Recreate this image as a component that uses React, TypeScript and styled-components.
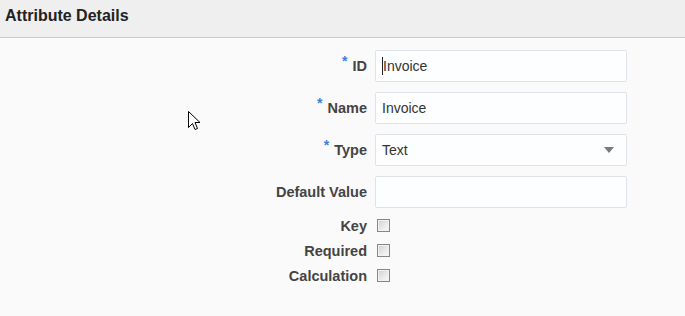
import styled, { createGlobalStyle } from "styled-components";

const GlobalStyle = createGlobalStyle`
  body {
    margin: 0;
    background: #fafafa;
    font-family: "Liberation Sans", Arial, sans-serif;
  }
`;

const Page = styled.div`
  position: relative;
  width: 685px;
  height: 316px;
  background: #fafafa;
  overflow: hidden;
`;

const Header = styled.div`
  height: 37px;
  line-height: 31px;
  padding-left: 5px;
  background: #efefef;
  border-bottom: 1px solid #c5ced7;
  font-size: 16px;
  font-weight: bold;
  color: #222;
`;

const Form = styled.div`
  display: flex;
  flex-direction: column;
  padding-top: 12px;
`;

const Row = styled.div<{ $check?: boolean }>`
  display: flex;
  align-items: center;
  gap: 8px;
  height: ${(p) => (p.$check ? "25px" : "32px")};
  margin-bottom: ${(p) => (p.$check ? "0" : "10px")};
`;

const CheckGroup = styled.div`
  display: flex;
  flex-direction: column;
  margin-top: -5px;
`;

const Label = styled.div`
  width: 367px;
  text-align: right;
  font-size: 14.5px;
  font-weight: bold;
  color: #444;
  white-space: nowrap;
`;

const Star = styled.span`
  color: #3b82d8;
  font-size: 14px;
  position: relative;
  top: -5px;
  margin-right: 5px;
`;

const Field = styled.div`
  box-sizing: border-box;
  width: 252px;
  height: 32px;
  display: flex;
  align-items: center;
  padding: 0 6px;
  background: #fdfeff;
  border: 1px solid #dfe3e8;
  border-radius: 2px;
  font-size: 14px;
  color: #333;
`;

const Caret = styled.span`
  display: inline-block;
  width: 1px;
  height: 18px;
  background: #222;
  margin-right: 0;
`;

const Value = styled.span`
  flex: 1;
`;

const Arrow = styled.span`
  width: 0;
  height: 0;
  margin-right: 6px;
  border-left: 5px solid transparent;
  border-right: 5px solid transparent;
  border-top: 6px solid #7a7a7a;
`;

const Check = styled.span`
  box-sizing: border-box;
  display: inline-block;
  width: 13px;
  height: 13px;
  margin-left: 2px;
  border: 1px solid #868686;
  background: linear-gradient(135deg, #cfcfcf 0%, #ececec 60%, #fafafa 100%);
  box-shadow: inset 0 0 0 1px #f2f2f2;
`;

const Pointer = styled.svg`
  position: absolute;
  left: 188px;
  top: 111px;
`;

const TextRow = ({ label, required = false, children }) => (
  <Row>
    <Label>
      {required && <Star>*</Star>}
      {label}
    </Label>
    <Field>{children}</Field>
  </Row>
);

const CheckRow = ({ label }) => (
  <Row $check>
    <Label>{label}</Label>
    <Check />
  </Row>
);

export default function App() {
  return (
    <Page>
      <GlobalStyle />
      <Header>Attribute Details</Header>
      <Form>
        <TextRow label="ID" required>
          <Caret />
          <Value>Invoice</Value>
        </TextRow>
        <TextRow label="Name" required>
          <Value>Invoice</Value>
        </TextRow>
        <TextRow label="Type" required>
          <Value>Text</Value>
          <Arrow />
        </TextRow>
        <TextRow label="Default Value" />
        <CheckGroup>
          <CheckRow label="Key" />
          <CheckRow label="Required" />
          <CheckRow label="Calculation" />
        </CheckGroup>
      </Form>
      <Pointer width="13" height="20" viewBox="0 0 13 20">
        <path
          d="M0.5 0.5 L0.5 16.5 L4.5 12.5 L7 18.5 L9.5 17.5 L7 11.5 L12 11.5 Z"
          fill="#fff"
          stroke="#000"
          strokeWidth="1"
          strokeLinejoin="miter"
        />
      </Pointer>
    </Page>
  );
}
